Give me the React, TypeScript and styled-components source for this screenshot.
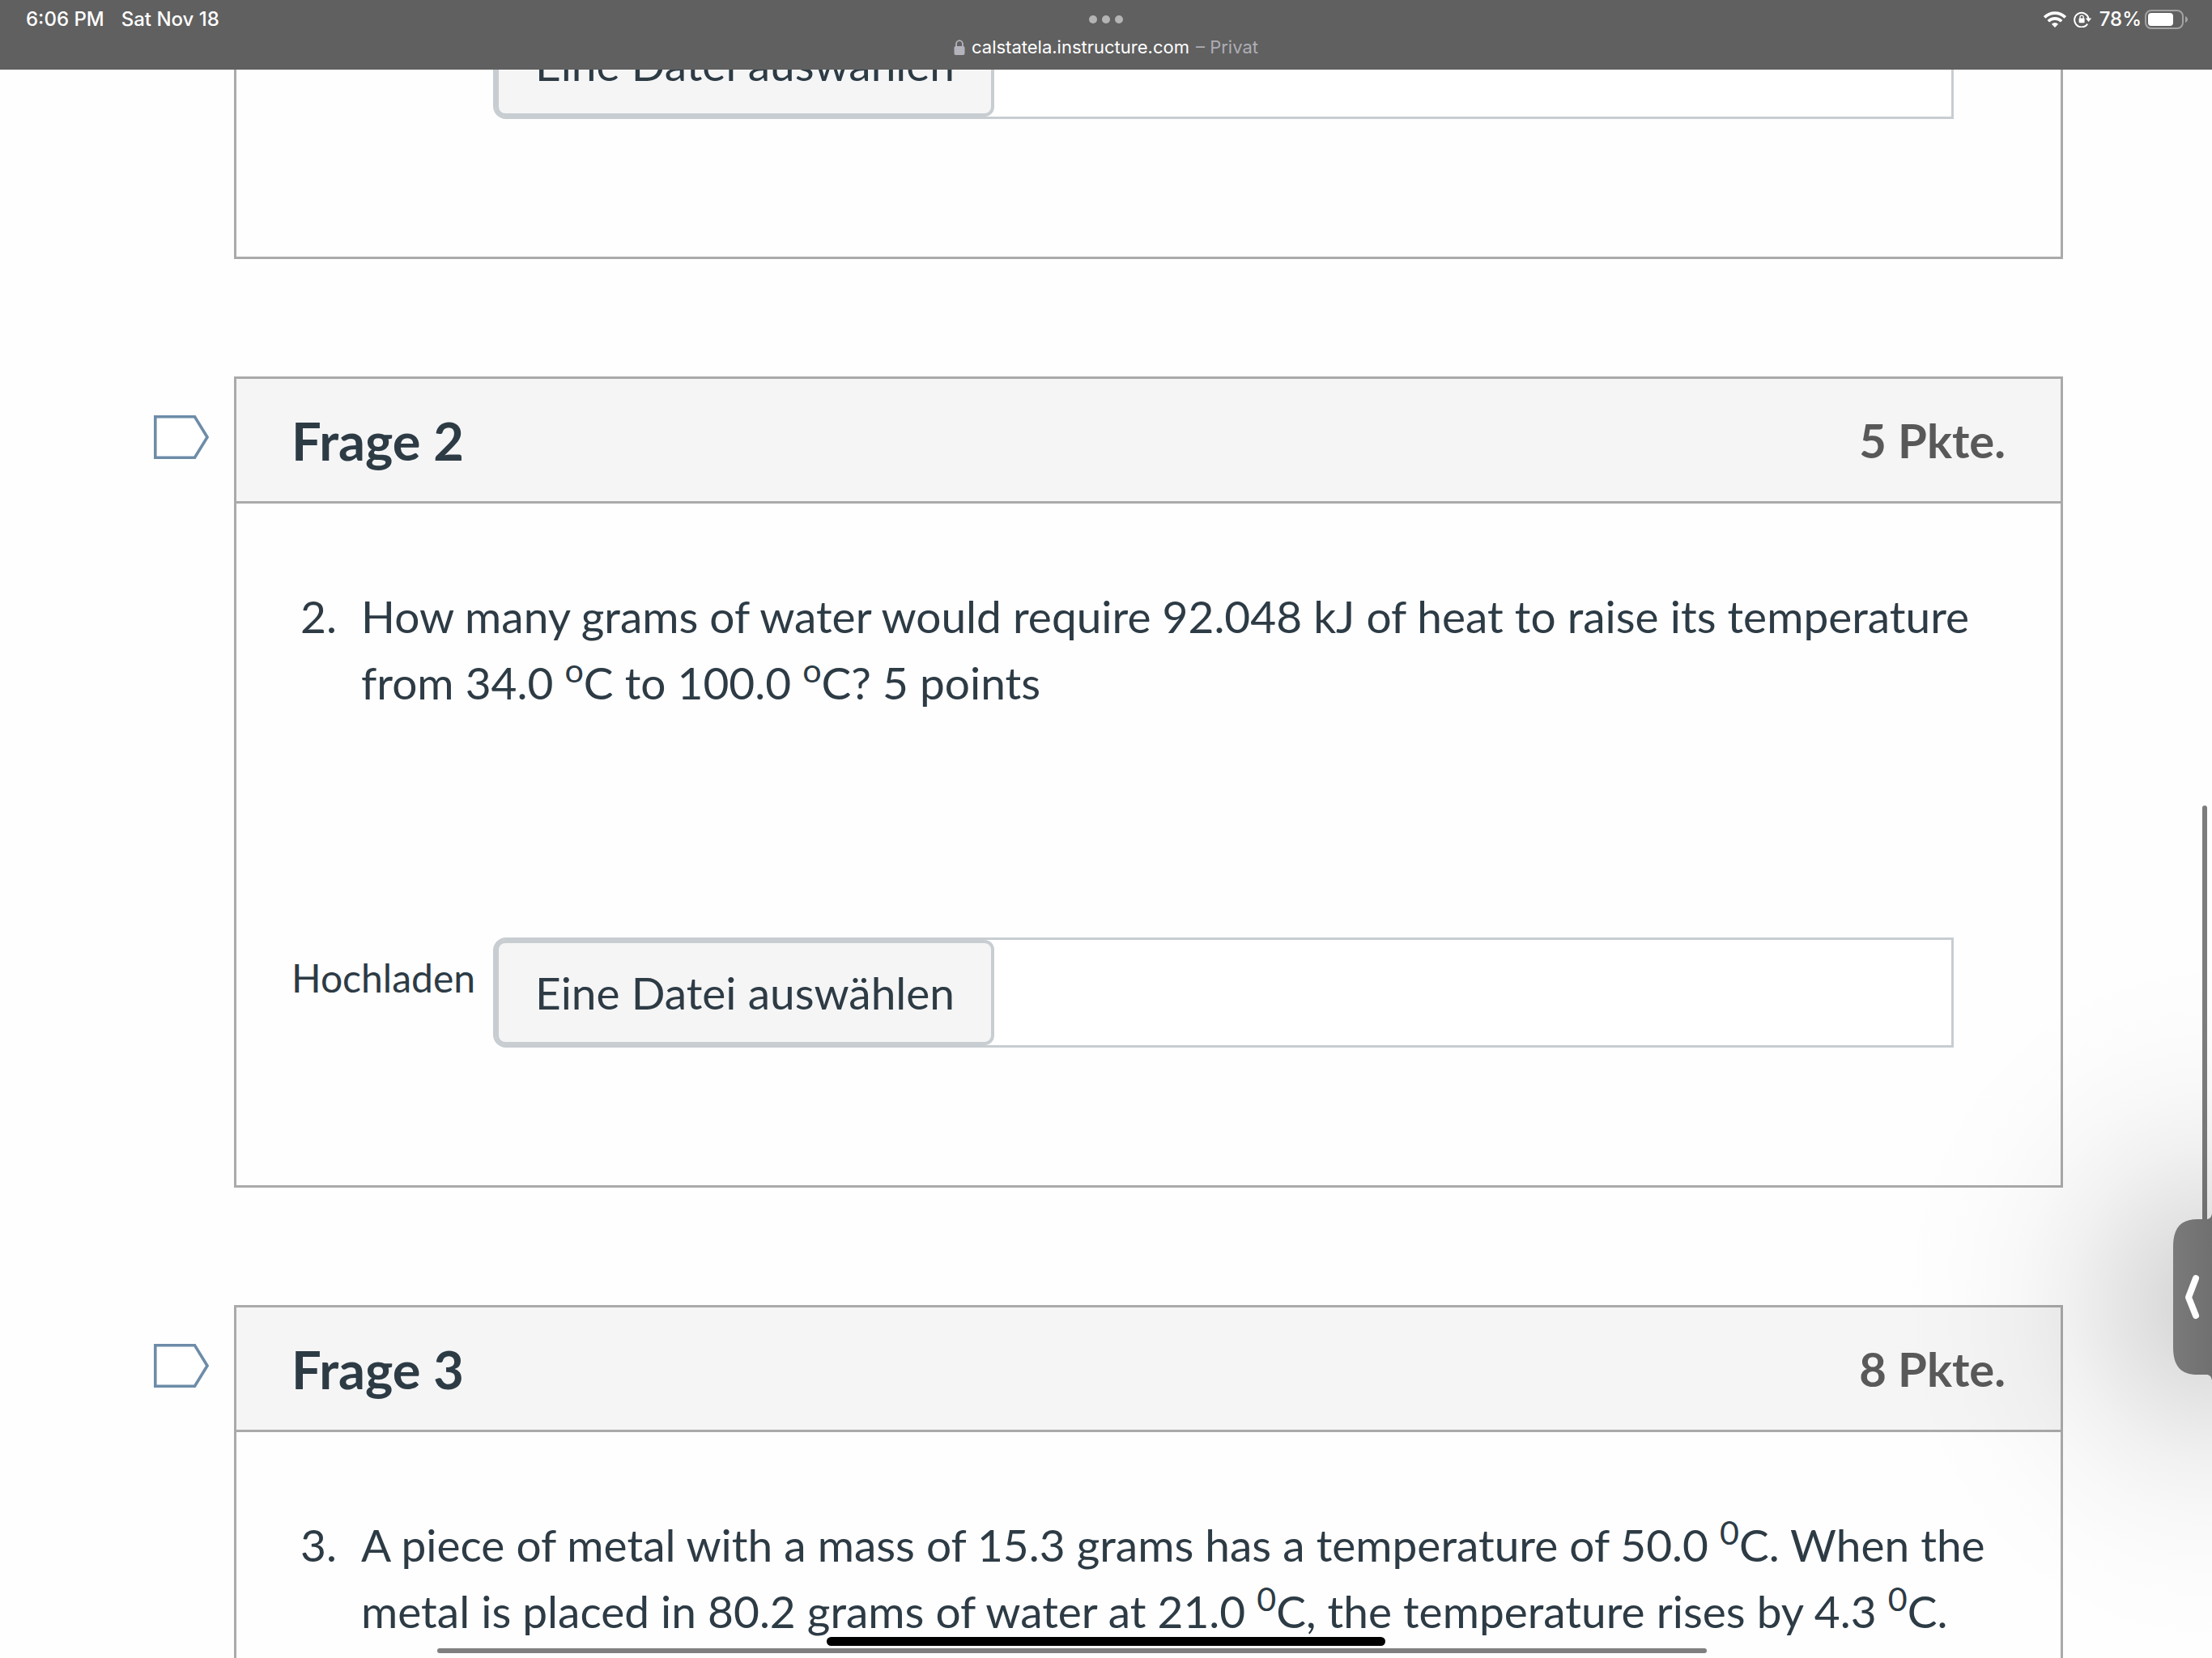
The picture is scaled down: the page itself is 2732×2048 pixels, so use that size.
import React, { useId, useRef, useState } from "react";
import styled, { createGlobalStyle } from "styled-components";

const GlobalStyle = createGlobalStyle`
  *, *::before, *::after { box-sizing: border-box; }
  html, body { margin: 0; height: 100%; overflow: hidden; background: #fefefe; }
`;

const ink = "#2d3b45";
const line = "#aaaaaa";
const fieldLine = "#c7cdd1";
const bodyFont = `Lato, "Liberation Sans", sans-serif`;
const systemFont = `Inter, "Liberation Sans", sans-serif`;

const Screen = styled.div`
  position: relative;
  height: 100vh;
  overflow: hidden;
  background: #fefefe;
  color: ${ink};
  font-family: ${bodyFont};
`;

/* ---------- browser bar ---------- */

const TopBar = styled.header`
  position: fixed;
  inset: 0 0 auto 0;
  z-index: 2;
  height: 86px;
  padding: 0 30px;
  display: grid;
  grid-template-columns: 1fr auto 1fr;
  align-items: start;
  background: #606060;
  color: #ffffff;
  font-family: ${systemFont};
  font-size: 24px;
  line-height: 48px;
`;

const Clock = styled.div`
  display: flex;
  gap: 21px;
  padding-left: 2px;
  font-weight: 500;
  white-space: pre;
`;

const Address = styled.div`
  display: flex;
  flex-direction: column;
  align-items: center;
`;

const TabMenu = styled.button`
  display: flex;
  align-items: center;
  gap: 6px;
  height: 48px;
  padding: 0;
  border: 0;
  background: none;
`;

const Dot = styled.span`
  width: 10px;
  height: 10px;
  border-radius: 50%;
  background: #b4b4b4;
`;

const Url = styled.div`
  display: flex;
  align-items: center;
  gap: 8px;
  font-size: 22px;
  line-height: 20px;
`;

const UrlNote = styled.span`
  color: #aeadb5;
`;

const Indicators = styled.div`
  display: flex;
  justify-content: flex-end;
  align-items: center;
  height: 48px;
`;

const Charge = styled.span`
  margin: 0 4px 0 9px;
  font-weight: 500;
`;

const RotationLock = styled.svg`
  margin-left: 9px;
`;

/* ---------- quiz ---------- */

const Quiz = styled.main`
  display: flex;
  flex-direction: column;
  gap: 145px;
  padding: 0 184px 0 190px;
`;

const Question = styled.section`
  display: grid;
  grid-template-columns: 68px 1fr;
  column-gap: 31px;
  align-items: start;
`;

const FlagButton = styled.button`
  margin-top: 48px;
  padding: 0;
  border: 0;
  background: none;
  display: block;
  line-height: 0;
`;

const Card = styled.div<{ $continued?: boolean }>`
  grid-column: 2;
  border: 3px solid ${line};
  border-top-width: ${(p) => (p.$continued ? 0 : 3)}px;
`;

const CardHeader = styled.div`
  display: flex;
  align-items: center;
  justify-content: space-between;
  height: 154px;
  padding: 0 68px;
  border-bottom: 3px solid ${line};
  background: #f5f5f5;
`;

const Title = styled.h2`
  margin: 0;
  font-size: 65px;
  line-height: 82px;
  font-weight: 700;
`;

const Points = styled.span`
  color: #595959;
  font-size: 58px;
  line-height: 82px;
  font-weight: 700;
`;

const CardBody = styled.div<{ $continued?: boolean }>`
  display: flex;
  flex-direction: column;
  gap: 274px;
  padding: ${(p) => (p.$continued ? 11 : 98)}px 132px 170px 68px;
`;

const Items = styled.ol`
  margin: 0 -64px 0 0;
  padding: 0 0 0 11px;
  list-style: none;
  font-size: 55px;
  line-height: 82px;
`;

const Item = styled.li`
  display: grid;
  grid-template-columns: 75px 1fr;
`;

const Raised = styled.sup`
  font-size: 75%;
  line-height: 0;
  vertical-align: 0.5em;
`;

const Upload = styled.div`
  display: flex;
  align-items: flex-start;
  gap: 22px;
`;

const UploadLabel = styled.label`
  padding-top: 14px;
  font-size: 48px;
  line-height: 72px;
`;

const FileField = styled.div`
  flex: 1;
  display: flex;
  height: 136px;
  border: 3px solid ${fieldLine};
  border-radius: 16px 0 0 16px;
  background: #ffffff;
`;

const ChooseButton = styled.button`
  flex: none;
  padding: 0 45px;
  border: 4px solid ${fieldLine};
  border-radius: 12px;
  background: #f5f5f5;
  color: ${ink};
  font-family: inherit;
  font-size: 55px;
  line-height: 82px;
`;

const FileName = styled.input`
  flex: 1;
  min-width: 0;
  padding: 0 24px;
  border: 0;
  outline: 0;
  background: transparent;
  color: ${ink};
  font-family: inherit;
  font-size: 48px;
`;

const HiddenFile = styled.input`
  display: none;
`;

/* ---------- system overlays ---------- */

const Glow = styled.div`
  position: absolute;
  right: -390px;
  top: 1180px;
  width: 780px;
  height: 860px;
  pointer-events: none;
  background: radial-gradient(
    closest-side,
    rgba(0, 0, 0, 0.18) 0%,
    rgba(0, 0, 0, 0.14) 13%,
    rgba(0, 0, 0, 0.095) 30%,
    rgba(0, 0, 0, 0.05) 46%,
    rgba(0, 0, 0, 0.022) 62%,
    rgba(0, 0, 0, 0.008) 80%,
    rgba(0, 0, 0, 0) 100%
  );
`;

const ScrollThumb = styled.div`
  position: absolute;
  right: 6px;
  top: 995px;
  width: 6px;
  height: 540px;
  border-radius: 3px;
  background: #7d7d7d;
`;

const SlideOverTab = styled.button`
  position: absolute;
  right: 0;
  top: 1499px;
  padding: 0;
  border: 0;
  background: none;
  line-height: 0;
`;

const PageThumb = styled.div`
  position: absolute;
  left: 540px;
  right: 624px;
  bottom: 6px;
  height: 6px;
  border-radius: 3px;
  background: #7f7f7f;
`;

const HomeIndicator = styled.div`
  position: absolute;
  left: 1021px;
  right: 1021px;
  bottom: 15px;
  height: 11px;
  border-radius: 6px;
  background: #000000;
`;

function FlagIcon() {
  return (
    <svg width="68" height="54" viewBox="0 0 68 54" aria-hidden="true">
      <path d="M1.8 1.8H50.5L66 27L50.5 52.2H1.8Z" fill="#fff" stroke="#6d8ca8" strokeWidth="3.6" />
    </svg>
  );
}

function LockIcon() {
  return (
    <svg width="14" height="19" viewBox="0 0 14 19" aria-hidden="true">
      <rect x="0.5" y="8" width="13" height="11" rx="2" fill="#b4b3bb" />
      <path d="M3 9V5.5a4 4.3 0 0 1 8 0V9" fill="none" stroke="#b4b3bb" strokeWidth="1.8" />
    </svg>
  );
}

function WifiIcon() {
  return (
    <svg width="28" height="20" viewBox="0 0 28 20" aria-hidden="true">
      <g fill="none" stroke="#fff" strokeWidth="3.6">
        <path d="M1.2 7.4a18.2 18.2 0 0 1 25.6 0" />
        <path d="M5.8 12.2a11.7 11.7 0 0 1 16.4 0" />
      </g>
      <path d="M14 20l-4.1-4.3a6 6 0 0 1 8.2 0Z" fill="#fff" />
    </svg>
  );
}

function RotationLockIcon() {
  return (
    <RotationLock width="23" height="20" viewBox="0 0 23 20" aria-hidden="true">
      <path d="M17.2 15.6A8.8 8.8 0 1 1 18.6 9" fill="none" stroke="#fff" strokeWidth="2" />
      <path d="M14.800 8.400h7.400L18.600 13Z" fill="#fff" />
      <rect x="6.6" y="8.600" width="7" height="5.600" rx="1" fill="#fff" />
      <path d="M8 9V7.200a2.100 2.100 0 0 1 4.200 0V9" fill="none" stroke="#fff" strokeWidth="1.3" />
    </RotationLock>
  );
}

function BatteryIcon() {
  return (
    <svg width="53" height="24" viewBox="0 0 53 24" aria-hidden="true">
      <rect x="1" y="1" width="46" height="22" rx="7" fill="none" stroke="#a3a3a3" strokeWidth="2" />
      <rect x="4" y="4" width="31" height="16" rx="4" fill="#fff" />
      <path d="M50 8c4 1.500 4 6.500 0 8Z" fill="#a3a3a3" />
    </svg>
  );
}

function FileUpload() {
  const id = useId();
  const picker = useRef<HTMLInputElement>(null);
  const [name, setName] = useState("");
  return (
    <Upload>
      <UploadLabel htmlFor={id}>Hochladen</UploadLabel>
      <FileField>
        <ChooseButton type="button" onClick={() => picker.current?.click()}>
          Eine Datei auswählen
        </ChooseButton>
        <FileName id={id} type="text" readOnly value={name} />
        <HiddenFile ref={picker} type="file" onChange={(e) => setName(e.target.files?.[0]?.name ?? "")} />
      </FileField>
    </Upload>
  );
}

type QuestionBlockProps = {
  number: number;
  points: number;
  upload?: boolean;
  children: React.ReactNode;
};

function QuestionBlock({ number, points, upload, children }: QuestionBlockProps) {
  return (
    <Question>
      <FlagButton type="button" aria-label={`Frage ${number} markieren`}>
        <FlagIcon />
      </FlagButton>
      <Card>
        <CardHeader>
          <Title>Frage {number}</Title>
          <Points>{points} Pkte.</Points>
        </CardHeader>
        <CardBody>
          <Items>
            <Item>
              <span>{number}.</span>
              <span>{children}</span>
            </Item>
          </Items>
          {upload && <FileUpload />}
        </CardBody>
      </Card>
    </Question>
  );
}

export default function App() {
  return (
    <Screen>
      <GlobalStyle />
      <TopBar>
        <Clock>
          <span>6:06 PM</span>
          <span>Sat Nov 18</span>
        </Clock>
        <Address>
          <TabMenu type="button" aria-label="Multitasking">
            <Dot />
            <Dot />
            <Dot />
          </TabMenu>
          <Url>
            <LockIcon />
            <span>calstatela.instructure.com</span>
            <UrlNote>– Privat</UrlNote>
          </Url>
        </Address>
        <Indicators>
          <WifiIcon />
          <RotationLockIcon />
          <Charge>78%</Charge>
          <BatteryIcon />
        </Indicators>
      </TopBar>

      <Quiz>
        <Question>
          <Card $continued>
            <CardBody $continued>
              <FileUpload />
            </CardBody>
          </Card>
        </Question>
        <QuestionBlock number={2} points={5} upload>
          How many grams of water would require 92.048 kJ of heat to raise its temperature from 34.0{" "}
          <Raised>o</Raised>C to 100.0 <Raised>o</Raised>C? 5 points
        </QuestionBlock>
        <QuestionBlock number={3} points={8}>
          A piece of metal with a mass of 15.3 grams has a temperature of 50.0 <Raised>0</Raised>C. When the
          metal is placed in 80.2 grams of water at 21.0 <Raised>0</Raised>C, the temperature rises by 4.3{" "}
          <Raised>0</Raised>C.
        </QuestionBlock>
      </Quiz>

      <ScrollThumb />
      <Glow />
      <SlideOverTab type="button" aria-label="Slide Over">
        <svg width="48" height="206" viewBox="0 0 48 206" aria-hidden="true">
          <defs>
            <linearGradient id="tab-shade" x1="0" x2="1">
              <stop offset="0" stopColor="#7a7a7a" />
              <stop offset="1" stopColor="#707070" />
            </linearGradient>
          </defs>
          <path
            d="M48 0C47 5 45 7 41 7H30C10 7 0 17 0 41V165C0 189 10 199 30 199H41C45 199 47 201 48 206Z"
            fill="url(#tab-shade)"
          />
          <path d="M28 80L19 103.500L28 126" fill="none" stroke="#fff" strokeWidth="8" strokeLinecap="round" strokeLinejoin="round" />
        </svg>
      </SlideOverTab>
      <PageThumb />
      <HomeIndicator />
    </Screen>
  );
}
